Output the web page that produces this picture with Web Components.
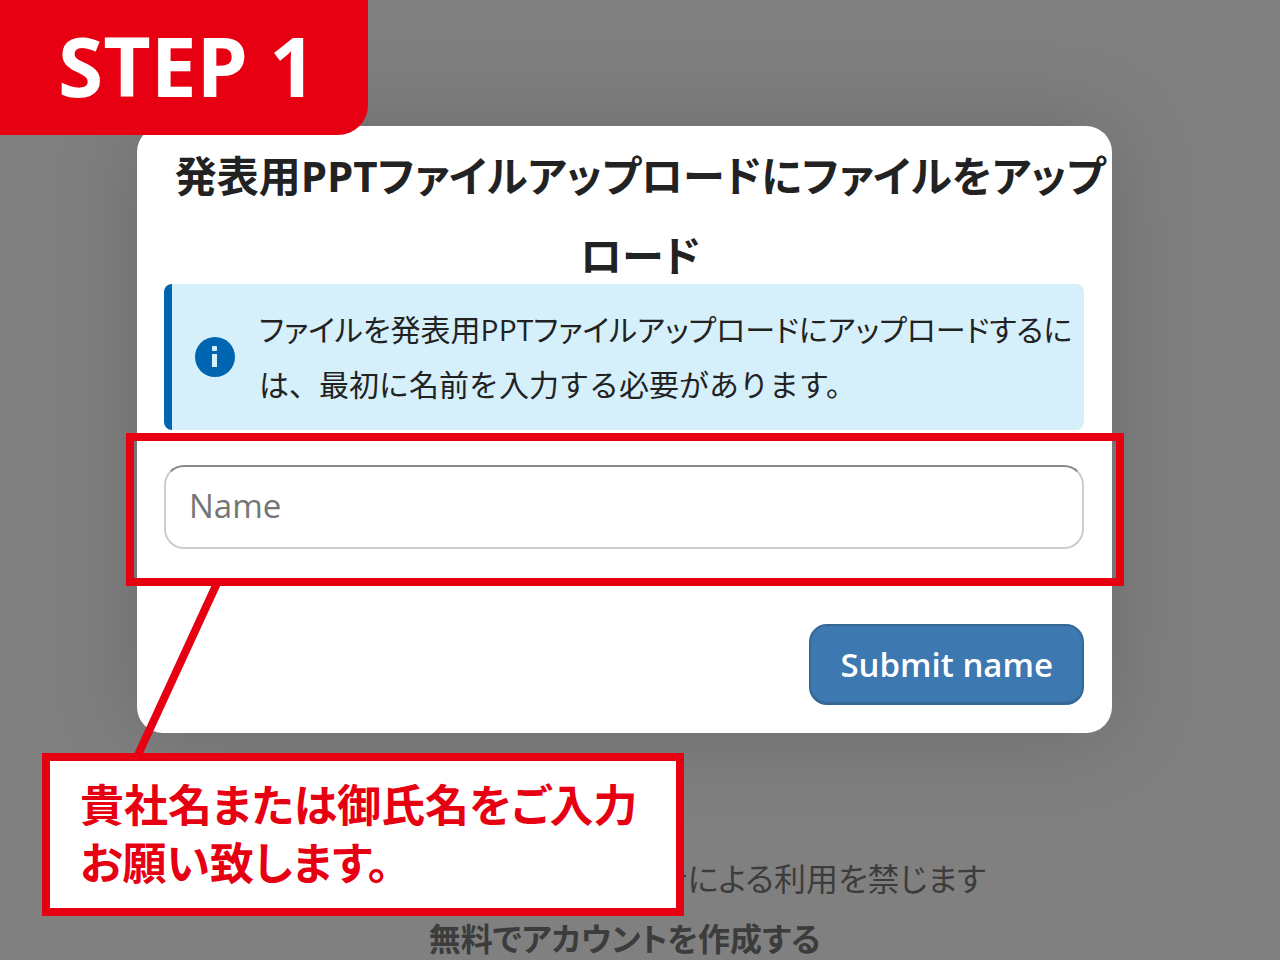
<!DOCTYPE html>
<html lang="ja">
<head>
<meta charset="utf-8">
<meta name="viewport" content="width=device-width, initial-scale=1">
<title>STEP 1</title>
<style>
    body {
        margin: 0;
        background: #808080;
        color: #222;
        font-family: "Open Sans", "Noto Sans CJK JP", sans-serif;
        font-feature-settings: "palt";
    }

    .full-width {
        font-feature-settings: normal;
    }
</style>
</head>
<body>
<step-page>
    <step-badge slot="badge">STEP 1</step-badge>
    <name-dialog>
        <span slot="title">発表用PPTファイルアップロードにファイルをアップ<br>ロード</span>
        <info-alert slot="alert">ファイルを発表用PPTファイルアップロードにアップロードするに<br><span class="full-width">は、最初に名前を入力する必要があります。</span></info-alert>
    </name-dialog>
    <step-callout slot="callout">貴社名または御氏名をご入力<br>お願い致します。</step-callout>
    <page-footer slot="footer">
        <span slot="notice">者による利用を禁じます</span>
        <span slot="link">無料でアカウントを作成する</span>
    </page-footer>
</step-page>

<script>
class StepPage extends HTMLElement {
    connectedCallback() {
        this.attachShadow({ mode: 'open' });
        this.shadowRoot.innerHTML = `
            <style>
                :host {
                    display: flex;
                    flex-direction: column;
                    position: relative;
                    min-height: 100vh;
                }

                main {
                    padding: 126px 168px 0 137px;
                }

                .badge {
                    position: absolute;
                    top: 0;
                    left: 0;
                    z-index: 1;
                }

                .callout {
                    position: absolute;
                    top: 753px;
                    left: 42px;
                    z-index: 1;
                }
            </style>
            <div class="badge"><slot name="badge"></slot></div>
            <main><slot></slot></main>
            <div class="callout"><slot name="callout"></slot></div>
            <slot name="footer"></slot>
        `;
    }
}

class StepBadge extends HTMLElement {
    connectedCallback() {
        this.attachShadow({ mode: 'open' });
        this.shadowRoot.innerHTML = `
            <style>
                :host {
                    display: block;
                    padding: 0 52px 5px 58px;
                    background: #e70012;
                    border-bottom-right-radius: 30px;
                    color: #fff;
                    font: bold 82px/130px "Open Sans", sans-serif;
                    white-space: nowrap;
                }
            </style>
            <slot></slot>
        `;
    }
}

class NameDialog extends HTMLElement {
    connectedCallback() {
        this.attachShadow({ mode: 'open' });
        this.shadowRoot.innerHTML = `
            <style>
                :host {
                    display: block;
                    padding: 10px 28px 28px 27px;
                    background: #fff;
                    border-radius: 26px;
                    box-shadow: 0 0 90px rgba(0, 0, 0, 0.18);
                }

                h1 {
                    margin: 0 -32px -12px 0;
                    font-size: 42px;
                    font-weight: 700;
                    line-height: 80px;
                    text-align: center;
                    white-space: nowrap;
                }

                form {
                    display: flex;
                    flex-direction: column;
                    gap: 75px;
                    margin-top: 35px;
                }

                input {
                    display: block;
                    box-sizing: border-box;
                    width: 100%;
                    height: 84px;
                    padding: 0 23px 3px;
                    border: 2px solid #ccc;
                    border-top-color: #888;
                    border-radius: 20px;
                    background: #fff;
                    color: #222;
                    font: 33px "Open Sans", sans-serif;
                }

                input::placeholder {
                    color: #757575;
                    opacity: 1;
                }

                button {
                    align-self: flex-end;
                    height: 81px;
                    padding: 0 29px;
                    border: 2px solid #346896;
                    border-bottom-width: 3px;
                    border-radius: 18px;
                    background: #3d78b0;
                    color: #fff;
                    font: 600 33px "Open Sans", sans-serif;
                }
            </style>
            <h1><slot name="title"></slot></h1>
            <slot name="alert"></slot>
            <form>
                <highlight-frame>
                    <input type="text" placeholder="Name" aria-label="Name">
                </highlight-frame>
                <button type="button">Submit name</button>
            </form>
        `;
    }
}

class InfoAlert extends HTMLElement {
    connectedCallback() {
        this.attachShadow({ mode: 'open' });
        this.shadowRoot.innerHTML = `
            <style>
                :host {
                    display: flex;
                    align-items: center;
                    gap: 24px;
                    padding: 18px 0 18px 31px;
                    border-radius: 8px;
                    background: linear-gradient(to right, #0066b2 8px, #d5f0fa 8px);
                    font-size: 30px;
                    line-height: 55px;
                    white-space: nowrap;
                }

                svg {
                    flex: none;
                    width: 40px;
                    height: 40px;
                }
            </style>
            <svg viewBox="0 0 40 40" aria-hidden="true">
                <circle cx="20" cy="20" r="20" fill="#0066b2"/>
                <rect x="17" y="9" width="5" height="5" rx="1" fill="#d5f0fa"/>
                <rect x="17" y="17" width="5" height="13" fill="#d5f0fa"/>
            </svg>
            <div><slot></slot></div>
        `;
    }
}

// Red frame around the field, with the line that leads to the callout
class HighlightFrame extends HTMLElement {
    connectedCallback() {
        this.attachShadow({ mode: 'open' });
        this.shadowRoot.innerHTML = `
            <style>
                :host {
                    display: block;
                    position: relative;
                }

                .frame {
                    position: absolute;
                    inset: -32px -40px -37px -38px;
                    border: 8px solid #e70012;
                    pointer-events: none;
                }

                svg {
                    position: absolute;
                    top: 140px;
                    left: 0;
                    width: 100px;
                    height: 176px;
                    pointer-events: none;
                }
            </style>
            <slot></slot>
            <div class="frame">
                <svg viewBox="0 0 100 176" aria-hidden="true">
                    <line x1="84" y1="0" x2="3" y2="176" stroke="#e70012" stroke-width="8"/>
                </svg>
            </div>
        `;
    }
}

class StepCallout extends HTMLElement {
    connectedCallback() {
        this.attachShadow({ mode: 'open' });
        this.shadowRoot.innerHTML = `
            <style>
                :host {
                    display: block;
                    padding: 13px 38px 18px 30px;
                    border: 8px solid #e70012;
                    background: #fff;
                    color: #e70012;
                    font: bold 44px/58px "Noto Sans CJK JP", sans-serif;
                    font-feature-settings: "palt";
                    white-space: nowrap;
                }
            </style>
            <slot></slot>
        `;
    }
}

class PageFooter extends HTMLElement {
    connectedCallback() {
        this.attachShadow({ mode: 'open' });
        this.shadowRoot.innerHTML = `
            <style>
                :host {
                    display: block;
                    height: 111px;
                    margin-top: 116px;
                    padding: 0 168px 0 137px;
                    overflow: hidden;
                    color: #3c3c3c;
                    font-size: 32px;
                    line-height: 60px;
                    text-align: center;
                }

                p {
                    margin: 0;
                }

                .notice {
                    padding-right: 126px;
                    text-align: right;
                }

                a {
                    color: inherit;
                    font-weight: 600;
                    text-decoration: none;
                }
            </style>
            <p class="notice"><slot name="notice"></slot></p>
            <p><a href="#"><slot name="link"></slot></a></p>
        `;
    }
}

customElements.define('step-page', StepPage);
customElements.define('step-badge', StepBadge);
customElements.define('highlight-frame', HighlightFrame);
customElements.define('name-dialog', NameDialog);
customElements.define('info-alert', InfoAlert);
customElements.define('step-callout', StepCallout);
customElements.define('page-footer', PageFooter);
</script>
</body>
</html>
